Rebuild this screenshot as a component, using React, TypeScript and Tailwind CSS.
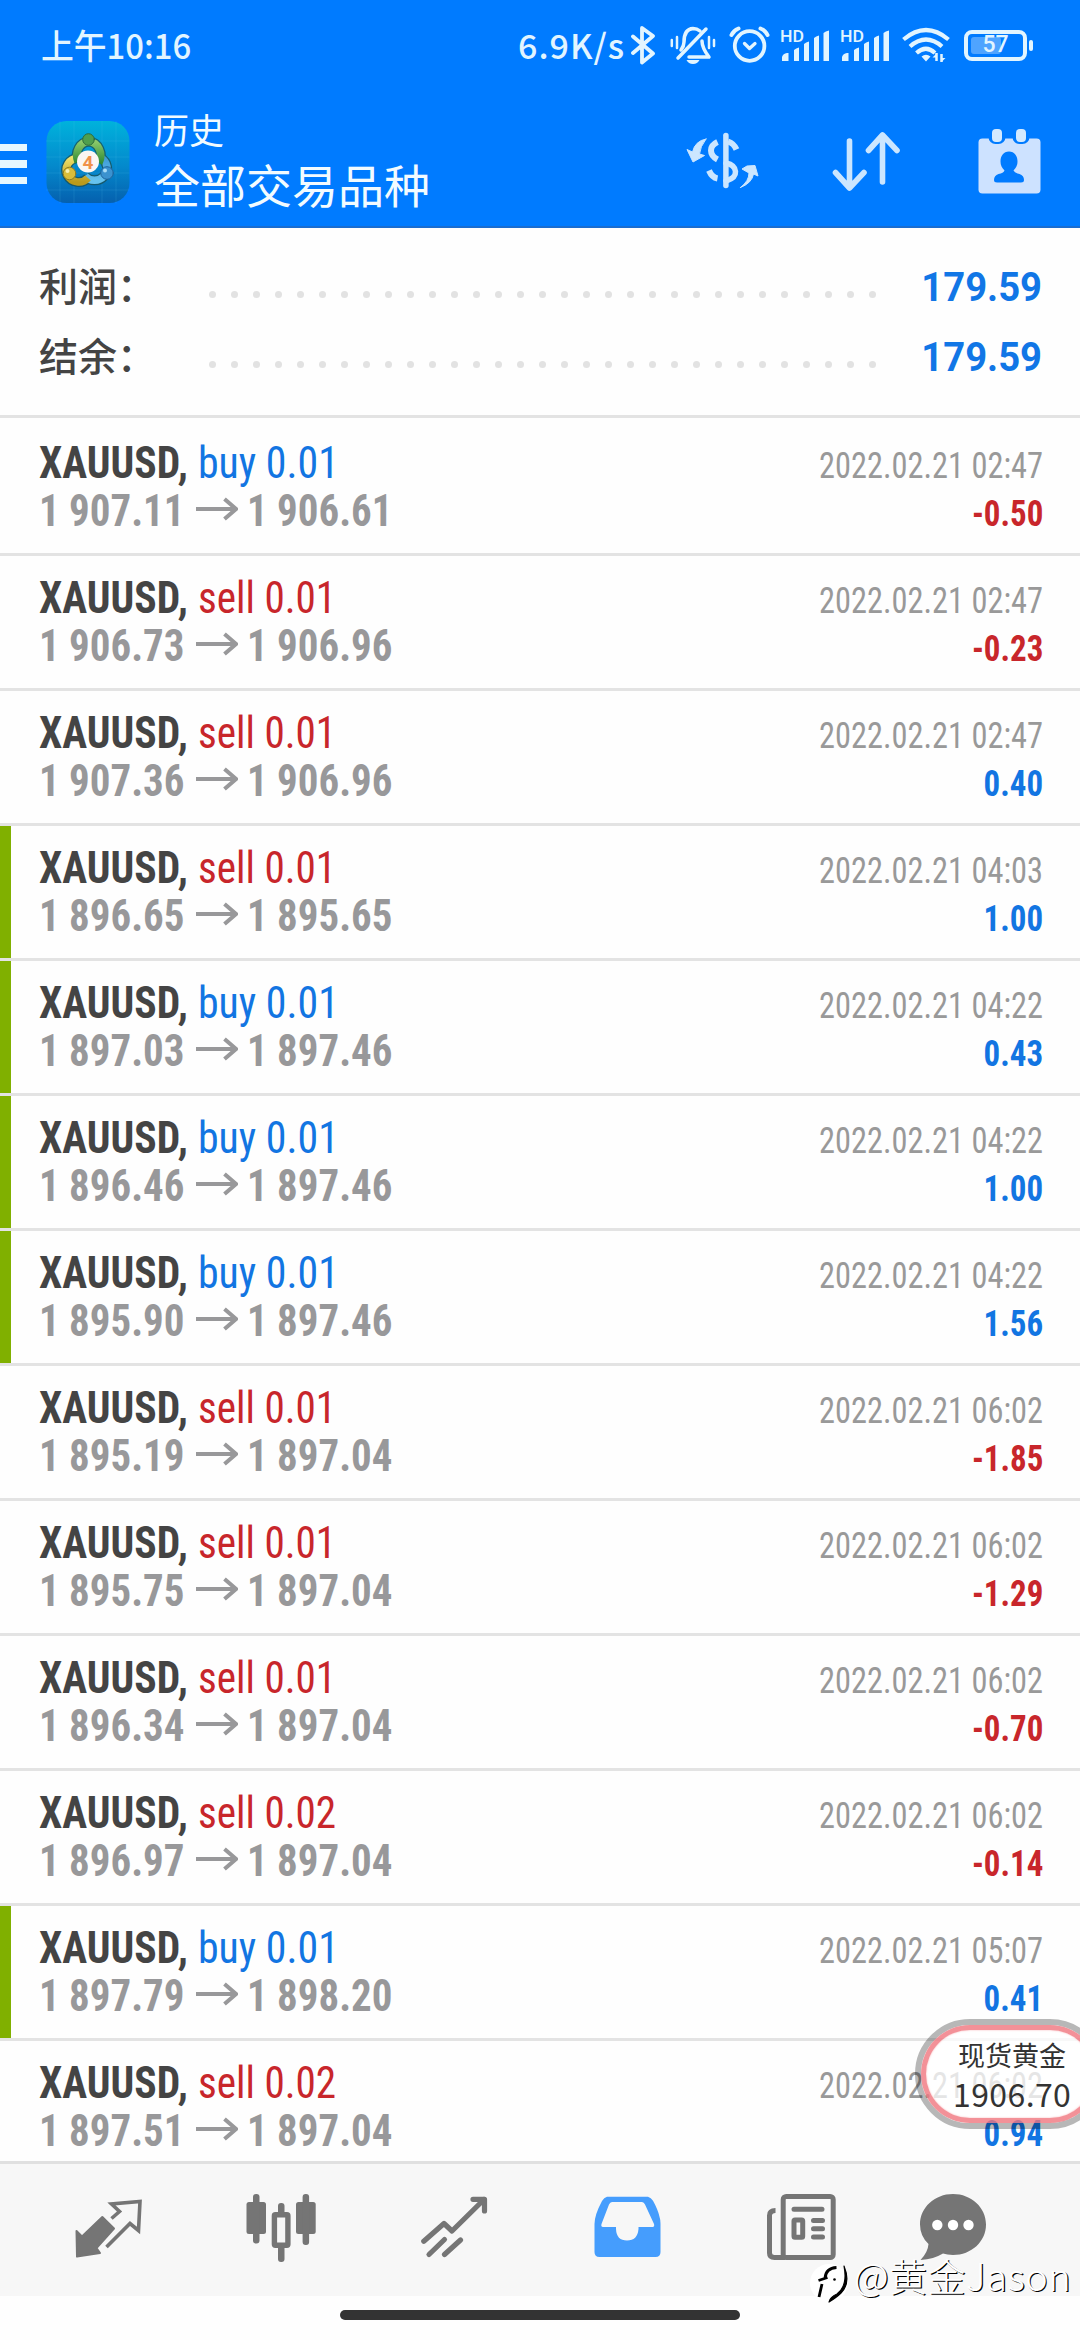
import type { ReactNode } from 'react';

type Deal = {
  side: 'buy' | 'sell';
  lot: string;
  open: string;
  close: string;
  time: string;
  profit: string;
  marked?: boolean;
};

const deals: Deal[] = [
  { side: 'buy', lot: '0.01', open: '1 907.11', close: '1 906.61', time: '02:47', profit: '-0.50' },
  { side: 'sell', lot: '0.01', open: '1 906.73', close: '1 906.96', time: '02:47', profit: '-0.23' },
  { side: 'sell', lot: '0.01', open: '1 907.36', close: '1 906.96', time: '02:47', profit: '0.40' },
  { side: 'sell', lot: '0.01', open: '1 896.65', close: '1 895.65', time: '04:03', profit: '1.00', marked: true },
  { side: 'buy', lot: '0.01', open: '1 897.03', close: '1 897.46', time: '04:22', profit: '0.43', marked: true },
  { side: 'buy', lot: '0.01', open: '1 896.46', close: '1 897.46', time: '04:22', profit: '1.00', marked: true },
  { side: 'buy', lot: '0.01', open: '1 895.90', close: '1 897.46', time: '04:22', profit: '1.56', marked: true },
  { side: 'sell', lot: '0.01', open: '1 895.19', close: '1 897.04', time: '06:02', profit: '-1.85' },
  { side: 'sell', lot: '0.01', open: '1 895.75', close: '1 897.04', time: '06:02', profit: '-1.29' },
  { side: 'sell', lot: '0.01', open: '1 896.34', close: '1 897.04', time: '06:02', profit: '-0.70' },
  { side: 'sell', lot: '0.02', open: '1 896.97', close: '1 897.04', time: '06:02', profit: '-0.14' },
  { side: 'buy', lot: '0.01', open: '1 897.79', close: '1 898.20', time: '05:07', profit: '0.41', marked: true },
  { side: 'sell', lot: '0.02', open: '1 897.51', close: '1 897.04', time: '06:02', profit: '0.94' },
];

function Icon({ box, w, h, className = '', children }: { box: string; w: number; h: number; className?: string; children: ReactNode }) {
  return (
    <svg viewBox={box} width={w} height={h} className={`block shrink-0 ${className}`} fill="none" strokeLinecap="round" strokeLinejoin="round">
      {children}
    </svg>
  );
}

function Signal() {
  return (
    <Icon box="779 22 52 40" w={52} h={40}>
      <text x="780" y="42" fontSize="17" fontFamily="Roboto" fontWeight="500" fill="#e2f5ff" textLength="24" lengthAdjust="spacingAndGlyphs">HD</text>
      <g fill="#e2f5ff">
        <path d="M782 61V57q1-3.500 5-4h1.500V61z" />
        <path d="M794 61V50q2-2 5-2.500V61z" />
        <path d="M804 61V44q2-2 5-2.500V61z" />
        <path d="M814 61V38q2-2 5-2.500V61z" />
        <path d="M823.500 61V33q2-2 5.500-2.500V61z" />
      </g>
    </Icon>
  );
}

function StatusBar() {
  return (
    <div className="flex h-[93px] items-center pl-[41px] text-[34px] leading-[40px] font-medium text-[#e2f5ff]">
      <span className="-mt-[4px] w-[477px] origin-left scale-x-[.965]">上午10:16</span>
      <span className="-mt-[4px] w-[113px] shrink-0 whitespace-nowrap tracking-[1px]">6.9K/s</span>
      <Icon box="631 24 26 40" w={26} h={40} className="-mt-[4px]">
        <path d="M633 35.500L653 52.500L642 61.500V27L653 35L633 52" stroke="#e2f5ff" strokeWidth="3.800" />
      </Icon>
      <Icon box="670 25 46 40" w={46} h={40} className="-mt-[3px] ml-[13px]">
        <g stroke="#e2f5ff" strokeWidth="3">
          <path d="M678 58L706 29" strokeWidth="3.500" />
          <path d="M681 50q3-4 3-8q0-13 9-13.500q4 0 7 2.500M702 41q0 7 7 16H689" strokeWidth="3.500" />
          <path d="M671.800 40v6M677 37v11M709 37v11M714 40v6" strokeWidth="2.500" />
        </g>
        <path d="M686.500 60h13q-2 4-6.500 4t-6.500-4z" fill="#e2f5ff" />
      </Icon>
      <Icon box="729 26 41 38" w={41} h={38} className="-mt-[3px] ml-[13px]">
        <g stroke="#e2f5ff" strokeWidth="3.800">
          <circle cx="749.600" cy="46" r="14.800" />
          <path d="M744.500 43.500L749.500 48.500L755 43.500" strokeWidth="3.300" />
          <path d="M731.500 35q2-4.500 7-6.500M767.500 35q-2-4.500-7-6.500" strokeWidth="4" />
        </g>
      </Icon>
      <div className="-mt-[9px] ml-[9px] flex gap-[8px]">
        <Signal />
        <Signal />
      </div>
      <Icon box="902 27 49 38" w={49} h={38} className="-mt-[3px] ml-[11px]">
        <g stroke="#e2f5ff" strokeWidth="4.200" strokeLinecap="butt">
          <path d="M903.500 40.500Q926 21.500 948.500 40.500M910 47.500Q926 33.500 942 47.500M916.500 54Q926 45.500 935 54" />
          <path d="M936.500 54v8M941.500 55v8" strokeWidth="2.500" />
        </g>
        <path d="M921.500 57.500q4.500-3.500 9 0L926 62.500zM932.500 58.500l4-4v4zM945.500 59l-4 4v-4z" fill="#e2f5ff" />
      </Icon>
      <div className="relative -mt-[3px] ml-[13px] flex h-[31px] w-[63px] shrink-0 items-center justify-center rounded-[8px] border-4 border-[#e2f5ff]">
        <div className="absolute top-[3px] left-[3px] h-[17px] w-[30px] rounded-[3px] bg-[#4fa4ff]" />
        <span className="relative font-['Roboto'] text-[23px] leading-[22px] font-medium">57</span>
        <div className="absolute top-[6px] -right-[10px] h-[11px] w-[4px] rounded-full bg-[#e2f5ff]" />
      </div>
    </div>
  );
}

function AppLogo() {
  return (
    <Icon box="46 121 84 83" w={84} h={83}>
      <defs>
        <linearGradient id="tile" x1="0" y1="0" x2="0" y2="1">
          <stop offset="0" stopColor="#00b2dc" />
          <stop offset=".55" stopColor="#0489cc" />
          <stop offset="1" stopColor="#0560ae" />
        </linearGradient>
        <linearGradient id="green" x1="0" y1="0" x2="0" y2="1">
          <stop offset="0" stopColor="#8cc96a" />
          <stop offset="1" stopColor="#2f8a35" />
        </linearGradient>
        <linearGradient id="yellow" x1="0" y1="0" x2="0" y2="1">
          <stop offset="0" stopColor="#efe06a" />
          <stop offset="1" stopColor="#b99a1c" />
        </linearGradient>
        <linearGradient id="blue" x1="0" y1="0" x2="0" y2="1">
          <stop offset="0" stopColor="#3e9bd6" />
          <stop offset="1" stopColor="#66c2ee" />
        </linearGradient>
      </defs>
      <rect x="46.500" y="121" width="83" height="82" rx="20" fill="url(#tile)" />
      <path d="M60 121V203M74 121V203M102 121V203M116 121V203M46 141H129M46 157H129M46 173H129M46 190H129" stroke="#5fd0f0" strokeWidth=".6" opacity=".25" />
      <g strokeWidth="10" strokeLinecap="butt" stroke="#1c4f50" opacity=".75">
        <path d="M78 162a12 14 0 1 1 21 1" />
        <path d="M78 158a12.500 12 0 1 0 10 20" />
        <path d="M101 158a12.500 12 0 1 1 -16 18" />
      </g>
      <g strokeWidth="7.500" strokeLinecap="butt">
        <path d="M101 158a12.500 12 0 1 1 -16 18" stroke="url(#blue)" />
        <path d="M78 158a12.500 12 0 1 0 10 20" stroke="url(#yellow)" />
        <path d="M78 162a12 14 0 1 1 21 1" stroke="url(#green)" />
      </g>
      <circle cx="88.500" cy="139.500" r="5.800" fill="#4f9f4e" stroke="#2d6b3a" />
      <circle cx="69.500" cy="173.500" r="6.300" fill="#d9bd3a" stroke="#8d7b20" />
      <circle cx="107" cy="173" r="6.300" fill="#3b92cf" stroke="#1e639b" />
      <circle cx="67.500" cy="171" r="2" fill="#f7efb0" />
      <circle cx="105" cy="170.500" r="2" fill="#a9dcf7" />
      <circle cx="88" cy="161.500" r="11" fill="#fbf6f3" />
      <text x="88" y="168.500" textAnchor="middle" fontSize="19" fontFamily="Roboto" fontWeight="700" fill="#f0914a">4</text>
    </Icon>
  );
}

function Header() {
  return (
    <div className="flex h-[135px] items-start border-b-2 border-[#1a6dd0] pt-[17px]">
      <div className="mt-[33.500px] flex w-[27px] flex-col gap-[9px]">
        <div className="h-[7.500px] bg-[#e6f7ff]" />
        <div className="h-[7.500px] bg-[#e6f7ff]" />
        <div className="h-[7.500px] bg-[#e6f7ff]" />
      </div>
      <div className="mt-[11px] ml-[19px]">
        <AppLogo />
      </div>
      <div className="-mt-[2px] ml-[24px] w-[531px] text-[#f2fbff]">
        <div className="h-[46px] text-[35px] leading-[42px]">历史</div>
        <div className="-mt-[1px] text-[46px] leading-[60px]">全部交易品种</div>
      </div>
      <Icon box="684 130 76 62" w={76} h={62} className="mt-[20px]">
        <g stroke="#cbe6ff" strokeWidth="5.500">
          <path d="M724.900 135.500V185.500" />
          <path d="M727 141.500q6 2 8.500 8" strokeLinecap="butt" strokeWidth="6" />
          <path d="M725 163q9 2 9.500 8.500t-9.500 9.500" />
          <path d="M716.500 142q-6.500 3-6.500 8.500t6.500 9" strokeLinecap="butt" strokeWidth="6" />
          <path d="M708 170.500q3 7 8.500 8" strokeLinecap="butt" strokeWidth="6" />
        </g>
        <path d="M705 139Q694 141 691.500 152L686 149.500L692 162L703.500 155.500L698.500 154Q699 147 705 139z" fill="#cbe6ff" stroke="#cbe6ff" />
        <path d="M739.500 187.500Q748 181 748 173L741 169L746 166L754 165.500L757 176L752.500 174Q751 183 739.500 187.500z" fill="#cbe6ff" stroke="#cbe6ff" />
      </Icon>
      <Icon box="830 130 70 64" w={70} h={64} className="mt-[20px] ml-[70px]">
        <path d="M848.500 141V188M834.500 172.500L848.500 188L863 172.500M881.500 182V135M867.500 150.500L881.500 135L896 150.500" stroke="#cbe6ff" strokeWidth="5.600" />
      </Icon>
      <Icon box="975 126 68 70" w={68} h={70} className="mt-[16px] ml-[75px]">
        <rect x="977.500" y="138.500" width="62" height="55" rx="4" fill="#cde2ff" />
        <rect x="987.500" y="126" width="17" height="18" rx="7" fill="#007bff" />
        <rect x="1011.500" y="126" width="17" height="18" rx="7" fill="#007bff" />
        <rect x="991" y="129" width="10" height="13" rx="4" fill="#d4eaff" />
        <rect x="1015" y="129" width="10" height="13" rx="4" fill="#d4eaff" />
        <path d="M1008 151.500c-5.500 0-8.500 4.500-8.500 10c0 4 1.500 6.500 4 9q-1 2.500-6 3.500q-4.500 1.500-4.500 6q0 2.500 3 2.500h24q3 0 3-2.500q0-4.500-4.500-6q-5-1-6-3.500c2.500-2.500 4-5 4-9c0-5.500-3-10-8.500-10z" fill="#007bff" />
      </Icon>
    </div>
  );
}

function SummaryRow({ label, value }: { label: string; value: string }) {
  return (
    <div className="flex h-[70px] items-center pr-[38px] pl-[39px]">
      <span className="-mt-[4px] w-[170px] text-[39px] leading-[56px] font-medium text-[#444]">{label}</span>
      <div className="mt-[17px] flex w-[667px] justify-between">
        {Array.from({ length: 31 }, (_, i) => (
          <span key={i} className="size-[7px] rounded-full bg-[#e2e2e2]" />
        ))}
      </div>
      <span className="mt-[4px] grow origin-right scale-x-[.955] text-right font-['Roboto'] text-[40px] leading-[48px] font-bold text-[#1176e6]">{value}</span>
    </div>
  );
}

function Row({ deal, first }: { deal: Deal; first: boolean }) {
  const buy = deal.side === 'buy';
  const loss = deal.profit.startsWith('-');
  return (
    <div className={`flex shrink-0 border-b-3 border-[#e3e3e3] ${first ? 'h-[138px] pt-[3px]' : 'h-[135px]'}`}>
      <div className={`w-[11px] shrink-0 ${deal.marked ? 'bg-[#80b000]' : ''}`} />
      <div className="flex grow flex-col pt-[18px] pr-[37px] pl-[28px] font-['Roboto'] leading-[48px] [font-stretch:75%]">
        <div className="flex h-12 items-baseline whitespace-nowrap">
          <span className="w-[159px] shrink-0 origin-left scale-x-[.945] text-[44px] font-bold text-[#444]">XAUUSD,</span>
          <span className={`grow origin-left text-[44px] ${buy ? 'scale-x-[.95] text-[#1275e2]' : 'scale-x-[.935] text-[#c8262b]'}`}>
            {deal.side} {deal.lot}
          </span>
          <span className="origin-right scale-x-[.885] text-[36.600px] text-[#999]">2022.02.21 {deal.time}</span>
        </div>
        <div className="flex h-12 items-baseline whitespace-nowrap text-[44px] font-bold text-[#98989a]">
          <span className="w-[157px] shrink-0 origin-left scale-x-[.93]">{deal.open}</span>
          <Icon box="196 632 42 24" w={42} h={24} className="-translate-y-[5px]">
            <path d="M196 644H235M224.500 634L236 644L224.500 654" stroke="#98989a" strokeWidth="4" strokeLinecap="butt" strokeLinejoin="miter" />
          </Icon>
          <span className="ml-[9px] grow origin-left scale-x-[.93]">{deal.close}</span>
          <span className={`origin-right scale-x-[.9] text-[36.600px] ${loss ? 'text-[#c8262b]' : 'text-[#1275e2]'}`}>{deal.profit}</span>
        </div>
      </div>
    </div>
  );
}

function BottomNav() {
  const g = '#757575';
  return (
    <div className="flex h-[135px] shrink-0 items-start border-t-3 border-[#e0e0e0] bg-[#f7f7f7] pt-[27px] pl-[73px]">
      <Icon box="73 2191 71 72" w={71} h={72}>
        <path d="M76.500 2231L82 2236.500L102.300 2217L114 2228.500L96.500 2248L100 2253L77 2256.500z" fill={g} stroke={g} strokeWidth="2" />
        <path d="M111.500 2218.500L119.500 2211.500L111.500 2204L140 2201.500L138.500 2230.500L130 2223.500L106.500 2247" stroke={g} strokeWidth="3.600" strokeLinecap="butt" strokeLinejoin="miter" />
      </Icon>
      <Icon box="244 2191 74 74" w={74} h={74} className="ml-[100px]">
        <g fill={g}>
          <rect x="246.500" y="2202" width="19.500" height="32" rx="2.500" />
          <rect x="253" y="2194" width="6.500" height="49.500" rx="3" />
          <rect x="296" y="2202" width="19.700" height="32" rx="2.500" />
          <rect x="302.600" y="2194" width="6.500" height="51" rx="3" />
          <rect x="278" y="2203" width="6.500" height="12" rx="3" />
          <rect x="278" y="2245" width="6.500" height="17" rx="3" />
        </g>
        <rect x="274.400" y="2214.800" width="13.500" height="30.500" rx="1" stroke={g} strokeWidth="5.400" />
      </Icon>
      <Icon box="418 2191 72 72" w={72} h={72} className="ml-[100px]">
        <path d="M423.800 2241.300L444 2223.500L452 2231L484 2199.500" stroke={g} strokeWidth="5.200" />
        <path d="M473 2199.300H484.500V2211" stroke={g} strokeWidth="5.200" />
        <path d="M429 2254.500L444.500 2239.500M444.500 2254.500L460.500 2240" stroke={g} strokeWidth="5.200" />
      </Icon>
      <Icon box="592 2191 72 72" w={72} h={72} className="ml-[102px]">
        <path d="M607 2196.700H648q3 1 5 4q5 9 6.500 16q1 3 1 7V2252q0 5-5 5H599.500q-5 0-5-5V2224q0-9 7.500-23q2-3.500 5-4.300z" fill="#459dfd" />
        <path d="M612 2202H642q2 0 3 2.500L654 2224q.8 3-1.500 3H638.500V2229q-1 11.500-11.500 11.500T616 2229V2227H603q-2.300 0-1.500-3L609 2204.500q1-2.500 3-2.500z" fill="#f7f7f7" />
      </Icon>
      <Icon box="764 2191 74 72" w={74} h={72} className="ml-[100px]">
        <g stroke={g} strokeWidth="5">
          <rect x="783.200" y="2196.500" width="50" height="61" rx="3" />
          <path d="M775.500 2210.500q-6 0-6 5V2253q0 4.500 5 4.500H785" strokeLinecap="butt" />
          <path d="M794 2209.300H822M813.500 2220.500H822.500M813.500 2228.800H822.500M813.500 2237H822.500" />
          <rect x="794" y="2220" width="8.700" height="17.300" rx="1" />
        </g>
      </Icon>
      <Icon box="918 2191 70 72" w={70} h={72} className="ml-[80px]">
        <path d="M953 2194c18.500 0 33 13.500 33 30.500S971.500 2255 953 2255q-6-.3-10-1.500q-9 5.500-22.500 6.500q7.500-8 8-16Q920 2236 920 2224.500c0-17 14.500-30.500 33-30.500z" fill={g} />
        <circle cx="937.300" cy="2225" r="5.200" fill="#fff" />
        <circle cx="953" cy="2225" r="5.200" fill="#fff" />
        <circle cx="968.500" cy="2225" r="5.200" fill="#fff" />
      </Icon>
    </div>
  );
}

function PricePill() {
  return (
    <div className="absolute top-[2019px] left-[915px] w-[190px] rounded-full border-6 border-black/28">
      <div className="flex h-[98px] flex-col rounded-full border-5 border-[#f0767e]/80 bg-white/75 bg-clip-padding pt-[7px] pl-[32px] text-[#333] shadow-[inset_0_0_2px_#f8b0b4]">
        <span className="text-[27px] leading-[36px] font-normal">现货黄金</span>
        <span className="-mt-[2px] -ml-[5px] text-[32px] leading-[44px] tracking-[.4px]">1906.70</span>
      </div>
    </div>
  );
}

function Watermark() {
  return (
    <div className="absolute top-[2250px] left-[810px] flex items-start whitespace-nowrap">
      <Icon box="810 2262 44 44" w={44} h={44} className="mt-[12px]">
        <circle cx="829" cy="2283" r="19" fill="#fff" />
        <path d="M818.500 2280.500L827.500 2277.500M836.500 2267.500Q826 2268 825 2278M822 2284L819 2297" stroke="#000" strokeWidth="2.800" strokeLinecap="butt" />
        <path d="M844 2266Q851 2283 841 2293Q837 2297 829 2302Q830 2297 837 2294Q848 2286 844 2266z" fill="#000" stroke="#000" strokeWidth="1.200" />
        <circle cx="834.500" cy="2279.500" r="1.300" fill="#000" />
      </Icon>
      <span className="text-[38px] leading-[50px] font-light tracking-[.5px] text-white [text-shadow:1.200px_1.200px_0_#000]">@黄金Jason</span>
    </div>
  );
}

export default function App() {
  return (
    <div className="relative flex h-[2340px] w-[1080px] flex-col overflow-hidden bg-[#fefefe] font-['Noto_Sans_CJK_SC',sans-serif]">
      <div className="h-[228px] shrink-0 bg-[#007bff]">
        <StatusBar />
        <Header />
      </div>
      <div className="h-[190px] shrink-0 border-b-3 border-[#e3e3e3] pt-[23px]">
        <SummaryRow label="利润：" value="179.59" />
        <SummaryRow label="结余：" value="179.59" />
      </div>
      <div className="flex h-[1743px] shrink-0 flex-col overflow-hidden">
        {deals.map((deal, i) => (
          <Row key={i} deal={deal} first={i === 0} />
        ))}
      </div>
      <BottomNav />
      <div className="flex grow justify-center pt-[14px]">
        <div className="h-[10px] w-[400px] rounded-full bg-[#333]" />
      </div>
      <PricePill />
      <Watermark />
    </div>
  );
}
